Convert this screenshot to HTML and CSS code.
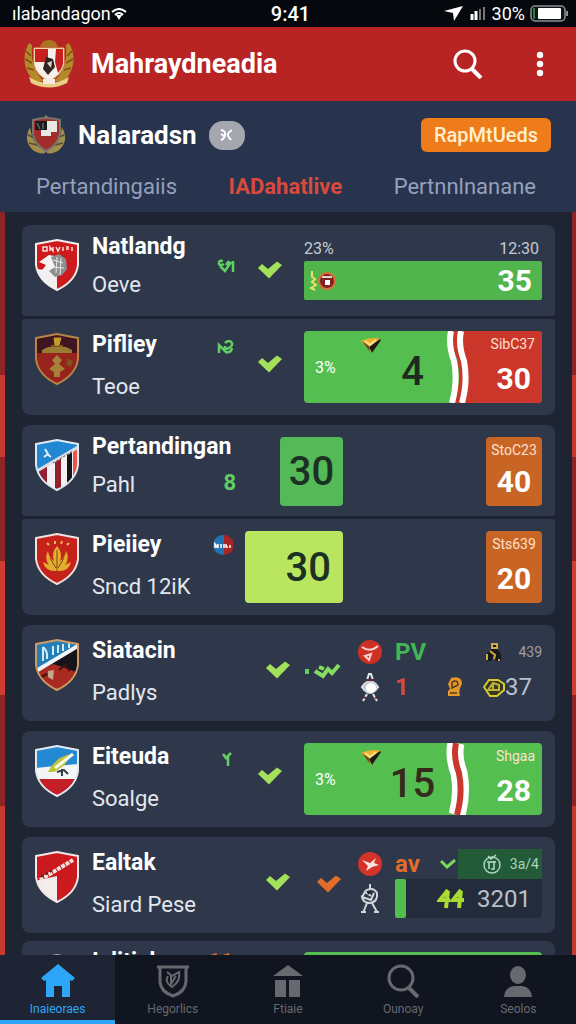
FILE: index.html
```html
<!DOCTYPE html>
<html lang="id">

<head>
    <meta charset="UTF-8">
    <meta name="viewport" content="width=device-width, initial-scale=1">
    <title>Mahraydneadia</title>
    <link rel="stylesheet" href="styles.css">
</head>

<body>
    <!-- shared shapes -->
    <svg class="defs" aria-hidden="true">
        <clipPath id="shield"><path d="M1 5Q12 3 22 1Q32 3 43 5V26Q41 42 22 51Q3 42 1 26Z" /></clipPath>
        <symbol id="outline" viewBox="0 0 44 52"><path d="M1 5Q12 3 22 1Q32 3 43 5V26Q41 42 22 51Q3 42 1 26Z" fill="none" stroke="currentColor" stroke-width="2" /></symbol>
        <symbol id="check" viewBox="0 0 25 18"><path d="M1 7L5 3L11 8L20 0.500L25 4L12 17.500Z" fill="currentColor" /></symbol>
        <symbol id="gem" viewBox="0 0 20 16">
            <path d="M0 4Q10-1 20 2L11 16Z" fill="#efb030" />
            <path d="M8 10L19 2L20 3L11 16Z" fill="#1c1b16" />
            <path d="M1 4L9 15L8 9Z" fill="#6b4a16" />
            <path d="M4 4L9 8L15 3" fill="none" stroke="#fbe48a" stroke-width="2" />
        </symbol>
        <symbol id="player" viewBox="0 0 20 32">
            <path d="M7 9L9 3L11 3L13 9M5 12L2 16L5 20M15 12L18 16L15 20M7 23L3 30M13 23L17 30" fill="none" stroke="#e4e6e9" stroke-width="2" />
            <circle cx="10" cy="16" r="7" fill="#c9ced5" />
            <circle cx="11" cy="17" r="5" fill="#fff" />
            <path d="M6 9H14M3 26L6 27M15 27L18 26" stroke="#5d2a30" stroke-width="2" />
        </symbol>
    </svg>

    <div class="status">
        <span class="carrier">ılabandagon
            <svg width="16" height="12" viewBox="0 0 16 12"><path d="M1 4Q8-2 15 4M4 7Q8 3 12 7" fill="none" stroke="#fff" stroke-width="2" /><path d="M5 7H11L8 12Z" fill="#fff" /></svg>
        </span>
        <span class="clock">9:41</span>
        <span class="power">
            <svg width="20" height="16" viewBox="0 0 20 16"><path d="M0 5L19 0L10 15L9 7Z" fill="#fff" /></svg>
            <svg width="18" height="14" viewBox="0 0 18 14"><path d="M3 7V13M7 4V13" stroke="#fff" stroke-width="3" /><path d="M11 2V13M15 0V13" stroke="#777" stroke-width="2" /></svg>
            <span>30%</span>
            <svg width="39" height="17" viewBox="0 0 39 17"><rect x="1" y="1" width="34" height="15" rx="4" fill="#10151a" stroke="#8b8f92" stroke-width="1.500" /><path d="M4 3V14" stroke="#2f7a35" stroke-width="2" /><rect x="8" y="3" width="23" height="11" rx="1" fill="#fff" /><path d="M37 6V11" stroke="#8b8f92" stroke-width="2" /></svg>
        </span>
    </div>

    <header class="appbar">
        <svg width="54" height="50" viewBox="0 0 54 50">
            <path d="M7 4Q-3 22 9 39Q14 44 22 42Q8 30 10 6ZM47 4Q57 22 45 39Q40 44 32 42Q46 30 44 6Z" fill="#b28a2c" />
            <path d="M4 12L9 17M3 20L10 24M5 29L12 31M50 12L45 17M51 20L44 24M49 29L42 31" stroke="#7d4e1c" stroke-width="1.500" />
            <path d="M18 8Q20 1 27 1Q34 1 36 8Z" fill="#a97723" />
            <path d="M12 9H42V25Q40 36 27 42Q14 36 12 25Z" fill="#f5f1ea" stroke="#d9b767" />
            <path d="M13 10H26V23H13ZM34 10H41V25Q40 30 36 34L33 23Z" fill="#c7201f" />
            <path d="M24 18L31 20L33 28L26 36L21 30Z" fill="#33231d" />
            <path d="M25 24L30 22L29 29Z" fill="#dcd6cf" />
            <path d="M7 38Q27 50 47 38L45 44Q27 53 9 44Z" fill="#e7cf83" />
            <path d="M21 40H33V45H21Z" fill="#f4eadf" />
        </svg>
        <h1>Mahraydneadia</h1>
        <button class="icon-btn" aria-label="Cari">
            <svg width="30" height="30" viewBox="0 0 30 30"><circle cx="12" cy="12" r="10" fill="none" stroke="#fff" stroke-width="3" /><path d="M18 19L28 29" stroke="#fff" stroke-width="4" /></svg>
        </button>
        <button class="icon-btn more" aria-label="Menu">
            <svg width="8" height="26" viewBox="0 0 8 26" fill="#fff"><circle cx="4" cy="4" r="3.200" /><circle cx="4" cy="13" r="3.200" /><circle cx="4" cy="22" r="3.200" /></svg>
        </button>
    </header>

    <section class="league">
        <div class="league-head">
            <svg width="42" height="40" viewBox="0 0 42 40">
                <path d="M5 12Q-3 26 9 36Q20 41 21 36Q8 32 5 12ZM37 12Q45 26 33 36Q22 41 21 36Q34 32 37 12Z" fill="#a38d4a" />
                <path d="M3 20L10 23M4 28L12 30M39 20L32 23M38 28L30 30" stroke="#4f4a37" stroke-width="1.500" />
                <path d="M17 4L21 0L25 4Z" fill="#98834a" />
                <path d="M8 5Q21 1 35 5V19Q33 30 21 36Q10 30 8 19Z" fill="#a12d2b" stroke="#77746e" stroke-width="2" />
                <path d="M10 6H22V15H10Z" fill="#1d1b1f" />
                <path d="M22 6H32V17H26V21H16V15H22Z" fill="#e9e6e6" />
                <path d="M12 8L15 14M18 8V14" stroke="#8d8a86" />
            </svg>
            <h2>Nalaradsn</h2>
            <button class="pill" aria-label="Pilih"><svg width="14" height="14" viewBox="0 0 14 14"><path d="M1 2Q6 3 5 7Q4 11 1 12M12 2Q7 5 8 8L11 12M1 6L4 8" fill="none" stroke="#fff" stroke-width="2" /></svg></button>
            <button class="report">RapMtUeds</button>
        </div>
        <nav class="tabs">
            <a href="#">Pertandingaiis</a>
            <a href="#" class="current">IADahatlive</a>
            <a href="#">Pertnnlnanane</a>
        </nav>
    </section>

    <main>
        <div class="list">
            <section class="group">
                <article class="row first">
                    <svg class="crest" viewBox="0 0 44 52">
                        <g clip-path="url(#shield)"><path d="M0 0H44V52H0Z" fill="#cc1a1d" /><path d="M0 30L22 32V52H0Z" fill="#f1eff0" />
                        <path d="M4 23L14 16L25 18L22 36L12 31L5 34L11 26Z" fill="#f4f4f4" /><path d="M16 18L24 15L31 20L32 30L27 36L20 38L14 32L20 28Z" fill="#8b8f90" />
                        <path d="M18 21L28 24M17 28L29 29M22 18L21 34M26 19L25 36" stroke="#e9e9e9" /></g>
                        <path d="M8 8V12H12V8ZM15 12V8L18 12V8M21 8L23 12L25 8M28 8V12M31 8H34M31 10H34M37 8V12" fill="none" stroke="#f7dcdc" stroke-width="1.500" />
                        <use href="#outline" color="#f2eeee" />
                    </svg>
                    <div class="names"><h3>Natlandg</h3><p>Oeve</p></div>
                    <svg class="mark mid" viewBox="0 0 18 14"><path d="M6 2Q1 1 2 5Q4 7 7 5M3 7L8 12L14 3M16 2V13M9 6L12 2" fill="none" stroke="#62cf63" stroke-width="2.500" /></svg>
                    <svg class="check"><use href="#check" /></svg>
                    <div class="timeline">
                        <div class="times"><span>23%</span><span>12:30</span></div>
                        <div class="bar">
                            <svg width="28" height="22" viewBox="0 0 28 22"><path d="M4 1V6M3 6L7 9L4 12L8 15L3 18L7 20" fill="none" stroke="#e3e469" stroke-width="2" /><circle cx="19" cy="11" r="8" fill="#7b2523" stroke="#df6b39" stroke-width="2" /><path d="M14 7H24" stroke="#e5d4c8" stroke-width="2" /><path d="M17 10H22V15H17Z" fill="#fff" /></svg>
                            <b>35</b>
                        </div>
                    </div>
                </article>
                <article class="row">
                    <svg class="crest" viewBox="0 0 44 52">
                        <g clip-path="url(#shield)"><path d="M0 0H44V52H0Z" fill="#96231c" /><path d="M0 0H44V20H0Z" fill="#3f1620" />
                        <path d="M7 17L13 14H31L37 17V20H7Z" fill="#9a7b34" /><path d="M19 5H26L24 12H20ZM16 13H28" fill="#c79b2a" stroke="#c79b2a" />
                        <path d="M22 22L27 27L24 31L30 36L25 39V44H19V39L14 36L20 31L17 27Z" fill="#a9803a" /><path d="M33 25L38 28L36 34L31 32Z" fill="#7c521f" /></g>
                        <use href="#outline" color="#b98445" />
                    </svg>
                    <div class="names"><h3>Pifliey</h3><p>Teoe</p></div>
                    <svg class="mark" viewBox="0 0 18 14"><path d="M2 13V5L8 11V6M8 3Q12-1 15 3Q16 7 9 9M9 12Q14 13 15 8" fill="none" stroke="#62cf63" stroke-width="2.500" /></svg>
                    <svg class="check low"><use href="#check" /></svg>
                    <div class="panel">
                        <span class="share">3%</span>
                        <svg class="gem"><use href="#gem" /></svg>
                        <b class="big">4</b>
                        <svg class="wave" viewBox="0 0 28 72" preserveAspectRatio="none"><path d="M9 0Q7 14 13 28Q18 48 11 72H28V0Z" fill="#cb372b" /><path d="M7 0Q4 14 10 30Q14 50 8 72M17 0Q14 14 20 30Q24 50 18 72" fill="none" stroke="#fff" stroke-width="6" /></svg>
                        <div class="side red"><small>SibC37</small><b>30</b></div>
                    </div>
                </article>
            </section>

            <section class="group">
                <article class="row first">
                    <svg class="crest" viewBox="0 0 44 52">
                        <g clip-path="url(#shield)"><path d="M0 0H44V52H0Z" fill="#2187d2" /><path d="M0 33L44 9V52H0Z" fill="#f4eff0" />
                        <path d="M2 32L12 27V52H2ZM20 23L26 19V52H20Z" fill="#941f2e" /><path d="M32 16L37 13V48H32Z" fill="#16131a" /><path d="M38 13L44 9V46H38Z" fill="#e65349" />
                        <path d="M2 32L43 8" stroke="#d9dee4" stroke-width="3" /><path d="M18 24L38 12" stroke="#42434d" stroke-dasharray="2 2" stroke-width="1" /></g>
                        <path d="M10 10L13 15L9 18M12 15L16 18" fill="none" stroke="#e0f0fb" stroke-width="2" />
                        <use href="#outline" color="#dfe9f1" />
                    </svg>
                    <div class="names"><h3>Pertandingan</h3><p>Pahl</p></div>
                    <span class="count">8</span>
                    <b class="tile">30</b>
                    <div class="side orange"><small>StoC23</small><b>40</b></div>
                </article>
                <article class="row">
                    <svg class="crest" viewBox="0 0 44 52">
                        <g clip-path="url(#shield)"><path d="M0 0H44V52H0Z" fill="#c4221b" /></g>
                        <path d="M22 13Q28 20 25 28Q30 25 31 18Q35 25 30 32L36 29Q34 38 24 38H20Q10 38 8 29L14 32Q9 25 13 18Q14 25 19 28Q16 20 22 13Z" fill="#e3ae2e" />
                        <path d="M22 17V42M15 25L21 35M29 25L23 35" stroke="#7f4517" /><path d="M12 10L14 12M20 8V11M27 8L26 11M34 10L32 12" stroke="#efb85a" stroke-width="2" />
                        <use href="#outline" color="#f0e3df" />
                    </svg>
                    <div class="names"><h3>Pieiiey</h3><p>Sncd 12iK</p></div>
                    <svg class="badge" viewBox="0 0 20 20"><circle cx="10" cy="10" r="10" fill="#2374ae" /><path d="M11 0A10 10 0 0 1 11 20Z" fill="#a92525" /><path d="M2 13V9L4 12L5 9V13M8 13V9M11 9V13M13 9V12H15M17 10V13" fill="none" stroke="#fff" stroke-width="1.500" /></svg>
                    <b class="tile lime">30</b>
                    <div class="side orange"><small>Sts639</small><b>20</b></div>
                </article>
            </section>

            <article class="row">
                <svg class="crest" viewBox="0 0 44 52">
                    <g clip-path="url(#shield)"><path d="M0 0H44V52H0Z" fill="#247fb6" /><path d="M0 32L44 6V52H0Z" fill="#171419" /><path d="M0 33L18 25L28 28L44 34V52H0Z" fill="#a92a20" />
                    <path d="M1 32L43 7" stroke="#f2f6fa" stroke-width="4" /><path d="M8 8V22M8 8Q13 12 12 20M18 7V16M23 6V14M28 5V12M34 4V9" fill="none" stroke="#d2eaf7" stroke-width="2" />
                    <path d="M13 32L19 31L18 41L13 38Z" fill="#c9a78c" /><path d="M24 31L30 26L35 32M6 38L12 35" fill="none" stroke="#3b1513" stroke-width="2" /></g>
                    <use href="#outline" color="#cd9b65" />
                </svg>
                <div class="names"><h3>Siatacin</h3><p>Padlys</p></div>
                <svg class="check"><use href="#check" /></svg>
                <svg class="trend" viewBox="0 0 36 16"><path d="M2 6V11" stroke="#62cf63" stroke-width="4" /><path d="M10 8L18 13L23 6L27 10L34 2M14 4L19 6" fill="none" stroke="#86dc5f" stroke-width="4" /></svg>
                <div class="stats">
                    <svg width="24" height="26" viewBox="0 0 24 26"><circle cx="12" cy="13" r="12" fill="#cf3025" /><path d="M4 8Q12 14 20 7M7 17L13 15L11 21Z" fill="none" stroke="#f5d5d0" stroke-width="2" /></svg>
                    <div class="line">
                        <b class="green">PV</b>
                        <svg class="push" width="16" height="20" viewBox="0 0 16 20"><path d="M5 2H11V7L15 12V19H10L8 14L5 19H1V11L5 8Z" fill="#15191b" /><path d="M6 2H11V6H6ZM4 9L9 13L8 17M1 12V18M13 17V19" fill="none" stroke="#d2a943" stroke-width="2" /></svg>
                        <span class="tiny">439</span>
                    </div>
                    <svg width="24" height="32"><use href="#player" /></svg>
                    <div class="line indent">
                        <b class="redtext">1</b>
                        <svg class="push" width="18" height="22" viewBox="0 0 18 22"><path d="M5 2Q16-1 16 8Q12 14 14 20H2V15L4 13L2 8Z" fill="#e5972a" /><path d="M6 6Q12 3 12 9L6 12V6M4 17H11" fill="none" stroke="#523b22" stroke-width="1.500" /></svg>
                        <svg class="coin" width="22" height="22" viewBox="0 0 22 22"><path d="M1 11L6 4H15L21 8V14L14 20H7Z" fill="#34391c" stroke="#d8c92f" stroke-width="2" /><path d="M5 14L10 7L16 9V14ZM10 8V14" fill="none" stroke="#bdb23a" stroke-width="2" /></svg>
                        <span class="num">37</span>
                    </div>
                </div>
            </article>

            <article class="row">
                <svg class="crest" viewBox="0 0 44 52">
                    <g clip-path="url(#shield)"><path d="M0 0H44V52H0Z" fill="#2289d2" /><path d="M0 23L20 21L44 19V52H0Z" fill="#f4f5f6" /><path d="M0 34H44V52H0Z" fill="#c41e26" />
                    <path d="M13 27Q20 12 36 9Q33 20 19 27Z" fill="#bfc536" /><path d="M20 23L38 9" stroke="#f7f7ee" stroke-width="3" /><path d="M22 27L29 25L33 29M27 24V31" fill="none" stroke="#353d4b" stroke-width="2" /></g>
                    <use href="#outline" color="#e3ebf0" />
                </svg>
                <div class="names"><h3>Eiteuda</h3><p>Soalge</p></div>
                <svg class="mark" viewBox="0 0 18 14"><path d="M6 2L9 6L14 1M11 5V14" fill="none" stroke="#62cf63" stroke-width="2.500" /></svg>
                <svg class="check low"><use href="#check" /></svg>
                <div class="panel">
                    <span class="share">3%</span>
                    <svg class="gem"><use href="#gem" /></svg>
                    <b class="big brown">15</b>
                    <svg class="wave" viewBox="0 0 28 72" preserveAspectRatio="none"><path d="M12 0Q9 14 15 30Q19 50 13 72" fill="none" stroke="#fff" stroke-width="17" /><path d="M12 0Q9 14 15 30Q19 50 13 72" fill="none" stroke="#c9382c" stroke-width="6" /></svg>
                    <div class="side"><small>Shgaa</small><b>28</b></div>
                </div>
            </article>

            <article class="row">
                <svg class="crest" viewBox="0 0 44 52">
                    <g clip-path="url(#shield)"><path d="M0 0H44V52H0Z" fill="#cc191e" /><path d="M0 30L22 25V52H0Z" fill="#f3eded" />
                    <path d="M5 29L38 9" stroke="#f1e1df" stroke-dasharray="4 1" stroke-width="4" /><path d="M6 26L18 19" stroke="#5d1d22" stroke-dasharray="3 2" stroke-width="2" /></g>
                    <use href="#outline" color="#eee8e9" />
                </svg>
                <div class="names"><h3>Ealtak</h3><p>Siard Pese</p></div>
                <svg class="check"><use href="#check" /></svg>
                <div class="trend"><svg class="check amber"><use href="#check" /></svg></div>
                <div class="stats">
                    <svg width="24" height="26" viewBox="0 0 24 26"><circle cx="12" cy="13" r="12" fill="#d5322a" /><path d="M4 9L12 12L18 7L16 12L21 14L14 16L8 20L10 15Z" fill="#f8e5e1" /></svg>
                    <div class="line">
                        <b class="ambertext">av</b>
                        <svg class="push" width="16" height="10" viewBox="0 0 16 10"><path d="M1 2L7 8L15 1" fill="none" stroke="#7ad85c" stroke-width="3" /></svg>
                        <div class="deep">
                            <svg width="20" height="20" viewBox="0 0 20 20"><circle cx="10" cy="11" r="8" fill="none" stroke="#a6d4bd" stroke-width="1.500" /><path d="M6 2L9 5L14 1M5 8H14M7 8V15M12 7V15H9" fill="none" stroke="#b4ddc8" stroke-width="1.500" /></svg>
                            <span>3a/4</span>
                        </div>
                    </div>
                    <svg width="24" height="32" viewBox="-2 0 24 32"><path d="M10 1V6M5 8Q13 3 17 10Q18 19 10 20Q3 20 2 14L11 17L14 10M7 20L3 30M12 20L17 29M2 14L5 9L11 13M1 29H6M14 29H19" fill="none" stroke="#d2d5d8" stroke-width="2" /><path d="M7 9L11 8L8 12Z" fill="#151b25" /></svg>
                    <div class="line track">
                        <i></i>
                        <svg class="push" width="28" height="22" viewBox="0 0 28 22"><path d="M11 2L3 12H13M11 3L9 20M24 2L16 12H27M24 3L22 20" fill="none" stroke="#a8dc35" stroke-width="4" /></svg>
                        <span class="num">3201</span>
                    </div>
                </div>
            </article>

            <article class="row peek">
                <svg class="crest" viewBox="0 0 44 52"><use href="#outline" color="#aab0b8" /></svg>
                <div class="names"><h3>Ialitiak</h3></div>
                <span class="count ambertext">11</span>
                <div class="panel"></div>
            </article>
        </div>
    </main>

    <nav class="bottom">
        <a href="#" class="active">
            <svg width="34" height="34" viewBox="0 0 34 34"><path d="M17 0L34 14L31 17L29 16V33H21V22H13V33H5V16L3 17L0 14Z" fill="currentColor" /></svg>
            <span>Inaieoraes</span>
        </a>
        <a href="#">
            <svg width="32" height="34" viewBox="0 0 32 34"><path d="M0 3H32M3 3V18Q4 28 16 32Q28 28 29 18V3" fill="none" stroke="currentColor" stroke-width="3" /><path d="M10 8L15 12L22 8Q24 17 15 23Q7 18 11 12M14 11V20L19 12" fill="none" stroke="currentColor" stroke-width="2" /></svg>
            <span>Hegorlics</span>
        </a>
        <a href="#">
            <svg width="32" height="34" viewBox="0 0 32 34"><path d="M16 1L31 12H1ZM3 16H14V33H3ZM17 16H28V33H17Z" fill="currentColor" /></svg>
            <span>Ftiaie</span>
        </a>
        <a href="#">
            <svg width="34" height="34" viewBox="0 0 34 34"><circle cx="15" cy="14" r="12" fill="none" stroke="currentColor" stroke-width="3" /><path d="M22 23L32 33" stroke="currentColor" stroke-width="4" /></svg>
            <span>Ounoay</span>
        </a>
        <a href="#">
            <svg width="30" height="34" viewBox="0 0 30 34"><ellipse cx="15" cy="11" rx="8" ry="9" fill="currentColor" /><path d="M1 33Q2 23 11 22H19Q28 23 29 33Z" fill="currentColor" /></svg>
            <span>Seolos</span>
        </a>
    </nav>
</body>

</html>
```
FILE: styles.css
```css
* {
    box-sizing: border-box;
}

body {
    margin: 0;
    height: 100vh;
    display: flex;
    flex-direction: column;
    background-color: #1f2433;
    color: white;
    font-family: Roboto, "Liberation Sans", sans-serif;
}

h1, h2, h3, p {
    margin: 0;
}

a {
    text-decoration: none;
    color: inherit;
}

button {
    border: 0;
    padding: 0;
    background: none;
    color: inherit;
    font-family: inherit;
}

svg {
    display: block;
    flex-shrink: 0;
}

.defs {
    position: absolute;
    width: 0;
    height: 0;
}

/* top bars */
.status {
    display: grid;
    grid-template-columns: 1fr auto 1fr;
    align-items: center;
    flex-shrink: 0;
    height: 27px;
    padding: 0 7px 0 12px;
    background-color: #05080d;
    font-size: 18px;
}

.carrier, .power {
    display: flex;
    align-items: center;
}

.clock {
    font-size: 20px;
    font-weight: 500;
}

.power {
    justify-content: flex-end;
    gap: 5px;
}

.appbar {
    display: flex;
    align-items: center;
    flex-shrink: 0;
    height: 74px;
    padding: 0 32px 0 22px;
    background-color: #b82424;
}

.appbar h1 {
    flex: 1;
    margin-left: 15px;
    font-size: 27px;
    font-weight: 700;
}

.more {
    margin-left: 53px;
}

.league {
    flex-shrink: 0;
    height: 111px;
    padding-top: 14px;
    background-color: #28334d;
}

.league-head {
    display: flex;
    align-items: center;
    height: 40px;
    padding: 0 25px;
}

.league h2 {
    margin-left: 11px;
    font-size: 26px;
    font-weight: 700;
}

.pill {
    display: flex;
    align-items: center;
    justify-content: center;
    width: 36px;
    height: 29px;
    margin-left: 12px;
    border-radius: 14px;
    background-color: #a5a7af;
}

.report {
    width: 130px;
    height: 34px;
    margin-left: auto;
    border-radius: 6px;
    background-color: #ee7c1b;
    color: #ffefcf;
    font-size: 20px;
    font-weight: 500;
}

.tabs {
    display: flex;
    justify-content: space-between;
    padding: 16px 40px 0 36px;
    color: #93a1bd;
    font-size: 22px;
    line-height: 32px;
}

.tabs .current {
    color: #d84a3d;
    font-weight: 700;
}

/* match list */
main {
    flex: 1;
    min-height: 0;
    overflow: hidden;
    padding: 0 4px 0 5px;
    background: linear-gradient(#8f2427 0 22%, #c8382c 22% 33%, #8f2427 33% 47%, #d03d30 47% 65%, #8f2427 65% 80%, #c63a2e 80%);
}

.list {
    display: flex;
    flex-direction: column;
    gap: 10px;
    min-height: 100%;
    padding: 13px 17px 0;
    background-color: #1f2433;
}

.group {
    display: flex;
    flex-direction: column;
    gap: 3px;
}

.row {
    display: flex;
    min-height: 96px;
    padding: 12px 13px;
    border-radius: 8px;
    background-color: #2e384a;
}

.row.first {
    min-height: 91px;
    padding-bottom: 10px;
    border-radius: 8px 8px 3px 3px;
}

.first + .row {
    border-radius: 3px 3px 8px 8px;
}

.crest {
    width: 44px;
    height: 52px;
    margin-top: 2px;
}

.names {
    flex: 1;
    min-width: 0;
    margin-left: 13px;
    white-space: nowrap;
}

.names h3 {
    font-size: 23px;
    font-weight: 700;
    line-height: 28px;
}

.names p {
    margin-top: 14px;
    color: #e2e7f0;
    font-size: 22px;
    line-height: 28px;
}

.first h3, .peek h3 {
    line-height: 20px;
}

.mark {
    width: 18px;
    height: 14px;
    margin-top: 9px;
}

.mark.mid {
    margin-top: 22px;
}

.check {
    width: 25px;
    height: 18px;
    margin: 24px 0 0 22px;
    color: #a4e15b;
}

.trend {
    width: 36px;
    height: 16px;
    margin: 26px 17px 0 15px;
}

.check.amber {
    margin: 0 0 0 11px;
    color: #e26c28;
}

.count {
    margin: 32px 44px 0 0;
    color: #5fce62;
    font-size: 22px;
    font-weight: 700;
    line-height: 28px;
}

.badge {
    width: 20px;
    height: 20px;
    margin: 4px 12px 0 0;
}

.timeline, .panel {
    width: 238px;
    margin-left: 22px;
}

.times {
    display: flex;
    justify-content: space-between;
    padding-right: 3px;
    color: #c5cad4;
    font-size: 16px;
    line-height: 24px;
}

.bar {
    display: flex;
    align-items: center;
    justify-content: space-between;
    height: 39px;
    padding: 0 10px 0 4px;
    border-radius: 2px;
    background-color: #52b44d;
}

.bar b, .side b {
    font-size: 30px;
    font-weight: 700;
    line-height: 36px;
}

.panel {
    position: relative;
    display: flex;
    align-items: center;
    overflow: hidden;
    border-radius: 4px;
    background-color: #55be50;
}

.share {
    width: 46px;
    padding-left: 11px;
    font-size: 16px;
}

.gem {
    align-self: flex-start;
    width: 20px;
    height: 16px;
    margin: 6px 0 0 11px;
}

.big {
    flex: 1;
    padding: 10px 0 0;
    color: #1c2a20;
    font-size: 40px;
    font-weight: 500;
    line-height: 44px;
    text-align: center;
}

.brown {
    color: #37291c;
}

.wave {
    align-self: stretch;
    width: 28px;
    height: auto;
}

.side {
    display: flex;
    flex-direction: column;
    justify-content: space-between;
    align-self: stretch;
    width: 70px;
    padding: 3px 7px 6px 0;
    text-align: right;
}

.side small {
    color: #ffe0cd;
    font-size: 14px;
    line-height: 20px;
}

.side b {
    padding-right: 4px;
}

.red {
    background-color: #cb372b;
}

.orange {
    width: 56px;
    margin-left: auto;
    padding-right: 0;
    border-radius: 4px;
    background-color: #c86424;
    text-align: center;
}

.orange b {
    padding-right: 0;
}

.tile {
    display: flex;
    align-items: center;
    justify-content: center;
    width: 63px;
    margin-right: 143px;
    border-radius: 4px;
    background-color: #55b957;
    color: #1b3123;
    font-size: 40px;
    font-weight: 500;
}

.lime {
    justify-content: flex-end;
    width: 98px;
    padding-right: 12px;
    background-color: #bae65f;
}

/* two line stats */
.stats {
    display: grid;
    grid-template-columns: 24px 147px;
    grid-template-rows: 30px 39px;
    column-gap: 13px;
    align-items: center;
}

.line {
    display: flex;
    align-items: center;
    align-self: stretch;
}

.line b {
    font-size: 24px;
}

.push {
    margin-left: auto;
}

.indent {
    padding-right: 10px;
}

.tiny {
    margin-left: 16px;
    color: #a39ba5;
    font-size: 14px;
}

.coin {
    margin-left: 19px;
}

.num {
    color: #b9c0cc;
    font-size: 24px;
}

.green {
    color: #42b655;
}

.redtext {
    color: #d54c3e;
}

.ambertext {
    color: #e26c28;
}

.deep {
    display: flex;
    align-items: center;
    align-self: stretch;
    justify-content: space-between;
    width: 84px;
    margin-left: 2px;
    padding: 0 3px 0 24px;
    background-color: #235b39;
    color: #a6d4bd;
    font-size: 14px;
}

.track {
    padding-right: 11px;
    border-radius: 0 0 4px 4px;
    background-color: #242c3b;
}

.track i {
    align-self: stretch;
    width: 11px;
    border-radius: 2px;
    background-color: #50bd4c;
}

.track .num {
    margin-left: 12px;
}

.peek {
    margin-top: -2px;
    padding-top: 11px;
}

.peek .count {
    margin: -4px 49px 0 0;
}

/* bottom navigation */
.bottom {
    display: grid;
    grid-template-columns: repeat(5, 1fr);
    flex-shrink: 0;
    height: 69px;
    background-color: #11151f;
}

.bottom a {
    display: flex;
    flex-direction: column;
    align-items: center;
    padding-top: 9px;
    border-bottom: 4px solid transparent;
    color: #67696e;
    font-size: 12px;
    line-height: 22px;
}

.bottom .active {
    border-color: #2da6f7;
    background-color: #1e2433;
    color: #2da6f7;
}
```
